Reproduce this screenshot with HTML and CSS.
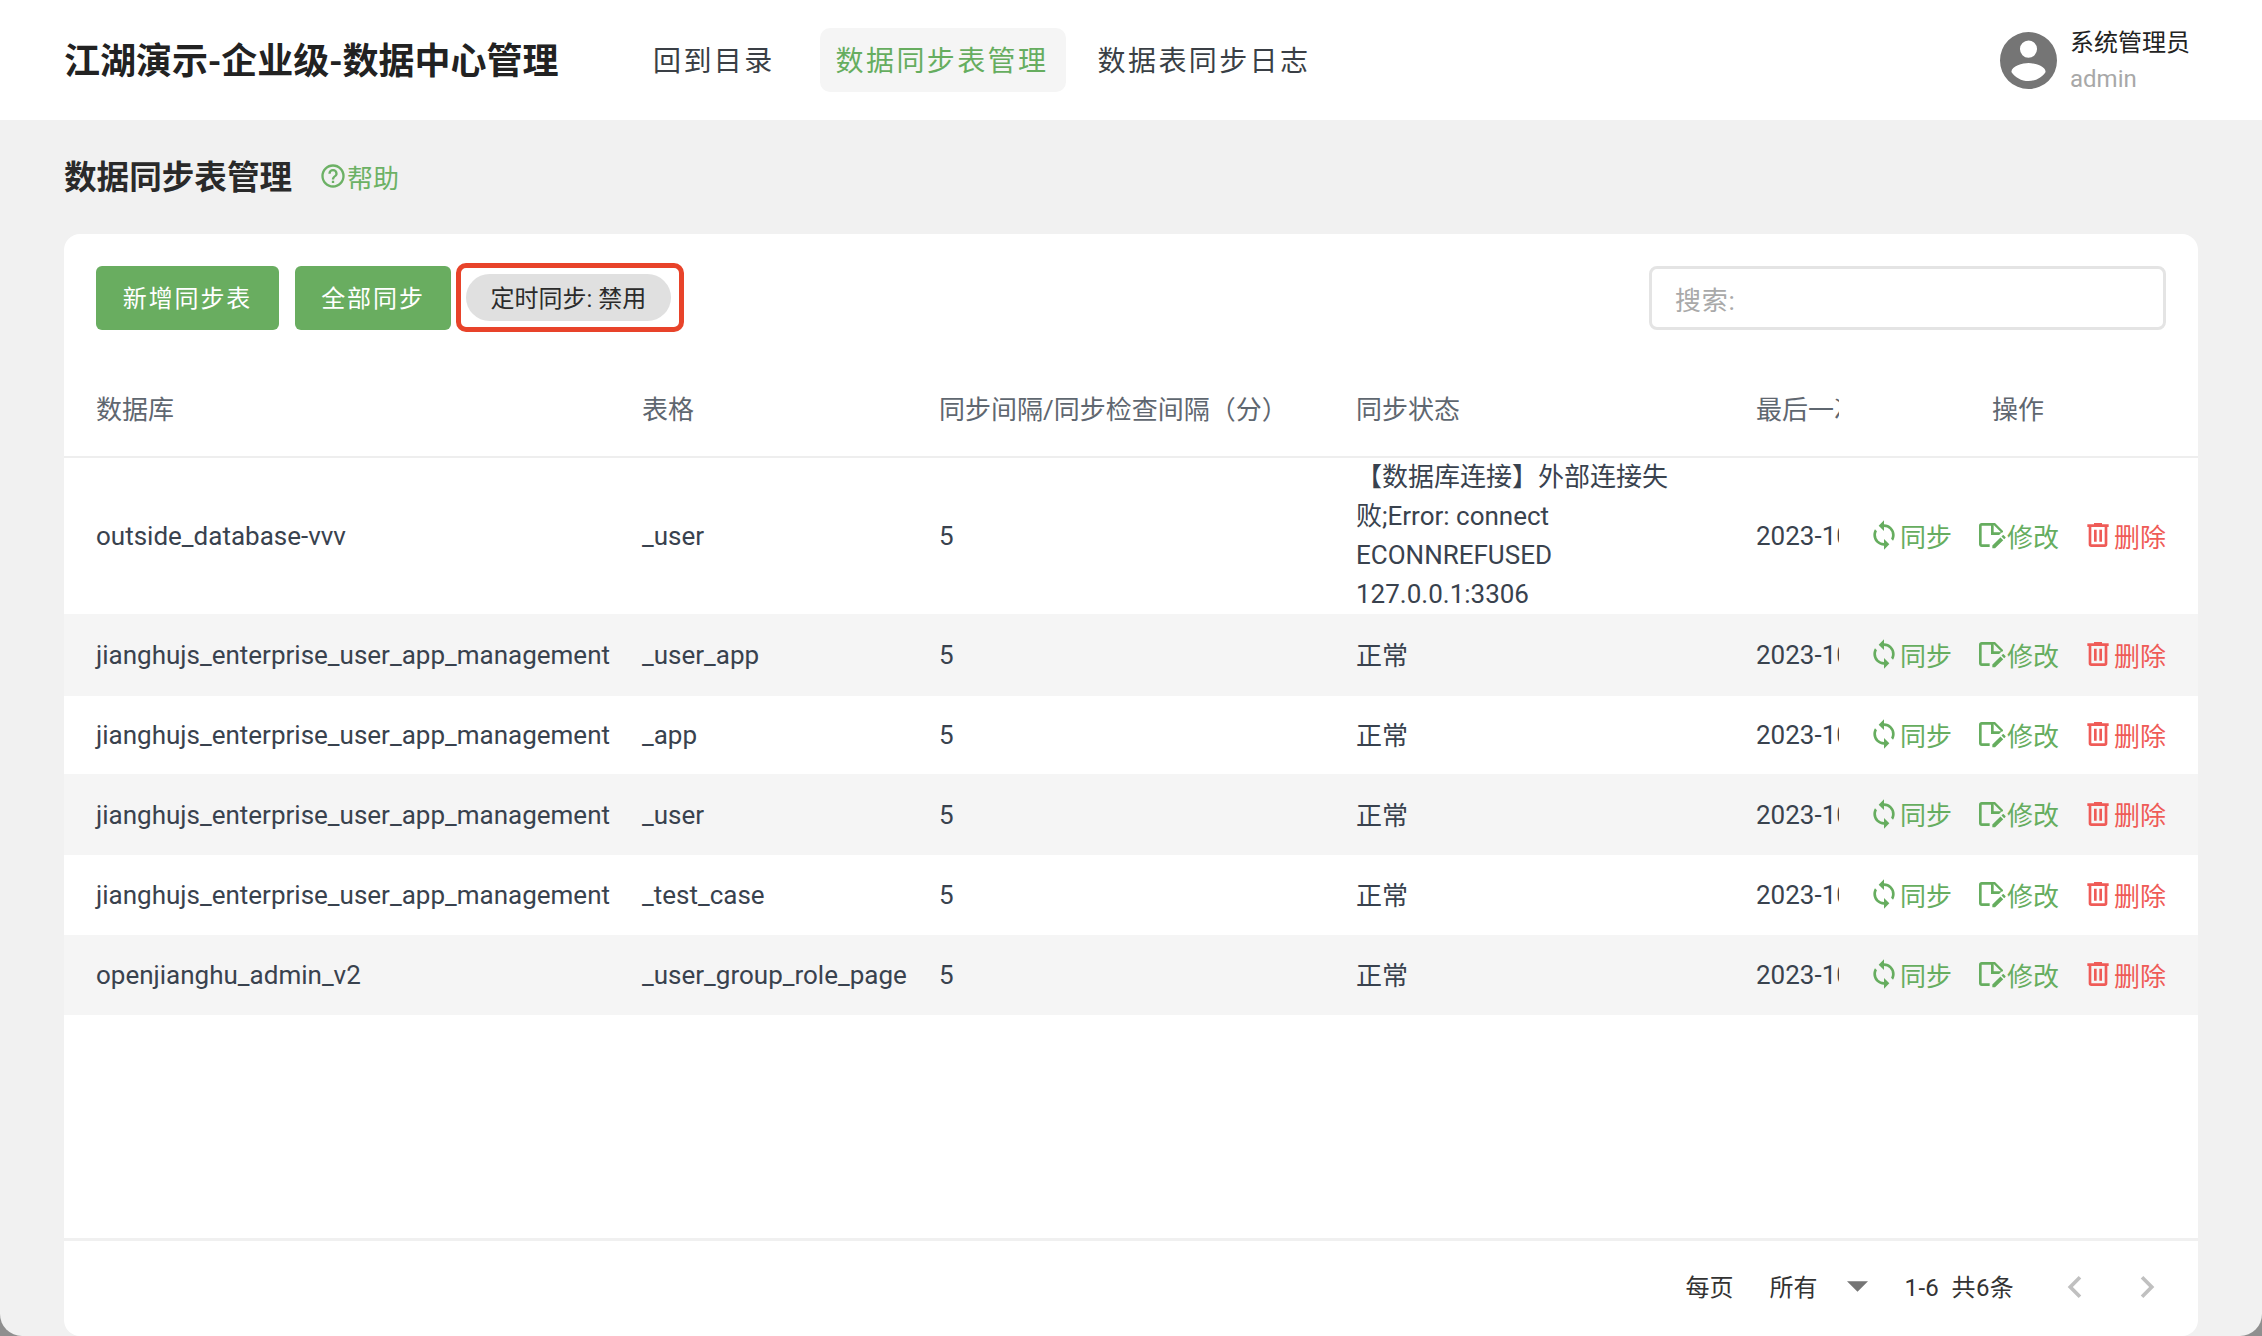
FILE: index.html
```html
<!DOCTYPE html>
<html lang="zh-CN">
<head>
<meta charset="utf-8">
<title>数据同步表管理</title>
<link rel="stylesheet" href="styles.css">
</head>
<body>
<div class="app">
  <header class="topbar">
    <div class="brand">江湖演示-企业级-数据中心管理</div>
    <nav class="nav">
      <a class="nav-item">回到目录</a>
      <a class="nav-item active">数据同步表管理</a>
      <a class="nav-item">数据表同步日志</a>
    </nav>
    <div class="user">
      <svg class="avatar" viewBox="2 2 20 20"><path d="M12,19.2C9.5,19.2 7.29,17.92 6,16C6.03,14 10,12.9 12,12.9C14,12.9 17.97,14 18,16C16.71,17.92 14.5,19.2 12,19.2M12,5A3,3 0 0,1 15,8A3,3 0 0,1 12,11A3,3 0 0,1 9,8A3,3 0 0,1 12,5M12,2A10,10 0 0,0 2,12A10,10 0 0,0 12,22A10,10 0 0,0 22,12A10,10 0 0,0 12,2Z"/></svg>
      <div class="user-text">
        <div class="user-name">系统管理员</div>
        <div class="user-id">admin</div>
      </div>
    </div>
  </header>
  <main class="main">
    <div class="page-head">
      <h1 class="page-title">数据同步表管理</h1>
      <a class="help">
        <svg class="help-icon" viewBox="0 0 24 24"><path d="M11,18H13V16H11V18M12,2A10,10 0 0,0 2,12A10,10 0 0,0 12,22A10,10 0 0,0 22,12A10,10 0 0,0 12,2M12,20C7.59,20 4,16.41 4,12C4,7.59 7.59,4 12,4C16.41,4 20,7.59 20,12C20,16.41 16.41,20 12,20M12,6A4,4 0 0,0 8,10H10A2,2 0 0,1 12,8A2,2 0 0,1 14,10C14,12 11,11.75 11,15H13C13,12.75 16,12.5 16,10A4,4 0 0,0 12,6Z"/></svg>帮助
      </a>
    </div>
    <section class="card">
      <div class="toolbar">
        <button class="btn btn-add">新增同步表</button>
        <button class="btn btn-all">全部同步</button>
        <div class="mark"><span class="chip">定时同步: 禁用</span></div>
        <div class="search">搜索:</div>
      </div>
      <table class="table">
        <colgroup>
          <col class="c1"><col class="c2"><col class="c3"><col class="c4"><col class="c5"><col class="c6">
        </colgroup>
        <thead>
          <tr>
            <th>数据库</th><th>表格</th><th>同步间隔/同步检查间隔（分）</th><th>同步状态</th>
            <th><div class="clip">最后一次同步时间</div></th><th class="th-ops">操作</th>
          </tr>
        </thead>
        <tbody>
          <tr class="r1">
            <td>outside_database-vvv</td><td>_user</td><td>5</td>
            <td class="status">【数据库连接】外部连接失败;Error: connect ECONNREFUSED 127.0.0.1:3306</td>
            <td><div class="clip">2023-10-12</div></td>
            <td class="ops">
              <a class="op"><svg class="ic" viewBox="0 0 24 24"><path d="M12,18A6,6 0 0,1 6,12C6,11 6.25,10.03 6.7,9.2L5.24,7.74C4.46,8.97 4,10.43 4,12A8,8 0 0,0 12,20V23L16,19L12,15M12,4V1L8,5L12,9V6A6,6 0 0,1 18,12C18,13 17.75,13.97 17.3,14.8L18.76,16.26C19.54,15.03 20,13.57 20,12A8,8 0 0,0 12,4Z"/></svg>同步</a>
              <a class="op"><svg class="ic" viewBox="0 0 24 24"><path d="M18.13 12L19.39 10.74C19.83 10.3 20.39 10.06 21 10V9L15 3H5C3.89 3 3 3.89 3 5V19C3 20.1 3.89 21 5 21H11V19.13L11.13 19H5V5H12V12H18.13M14 4.5L19.5 10H14V4.5M19.13 13.83L21.17 15.87L15.04 22H13V19.96L19.13 13.83M22.85 14.19L21.87 15.17L19.83 13.13L20.81 12.15C21 11.95 21.33 11.95 21.53 12.15L22.85 13.47C23.05 13.67 23.05 14 22.85 14.19Z"/></svg>修改</a>
              <a class="op del"><svg class="ic" viewBox="0 0 24 24"><path d="M9,3V4H4V6H5V19A2,2 0 0,0 7,21H17A2,2 0 0,0 19,19V6H20V4H15V3H9M7,6H17V19H7V6M9,8V17H11V8H9M13,8V17H15V8H13Z"/></svg>删除</a>
            </td>
          </tr>
          <tr class="r2">
            <td>jianghujs_enterprise_user_app_management</td><td>_user_app</td><td>5</td><td class="ok">正常</td>
            <td><div class="clip">2023-10-12</div></td>
            <td class="ops">
              <a class="op"><svg class="ic" viewBox="0 0 24 24"><path d="M12,18A6,6 0 0,1 6,12C6,11 6.25,10.03 6.7,9.2L5.24,7.74C4.46,8.97 4,10.43 4,12A8,8 0 0,0 12,20V23L16,19L12,15M12,4V1L8,5L12,9V6A6,6 0 0,1 18,12C18,13 17.75,13.97 17.3,14.8L18.76,16.26C19.54,15.03 20,13.57 20,12A8,8 0 0,0 12,4Z"/></svg>同步</a>
              <a class="op"><svg class="ic" viewBox="0 0 24 24"><path d="M18.13 12L19.39 10.74C19.83 10.3 20.39 10.06 21 10V9L15 3H5C3.89 3 3 3.89 3 5V19C3 20.1 3.89 21 5 21H11V19.13L11.13 19H5V5H12V12H18.13M14 4.5L19.5 10H14V4.5M19.13 13.83L21.17 15.87L15.04 22H13V19.96L19.13 13.83M22.85 14.19L21.87 15.17L19.83 13.13L20.81 12.15C21 11.95 21.33 11.95 21.53 12.15L22.85 13.47C23.05 13.67 23.05 14 22.85 14.19Z"/></svg>修改</a>
              <a class="op del"><svg class="ic" viewBox="0 0 24 24"><path d="M9,3V4H4V6H5V19A2,2 0 0,0 7,21H17A2,2 0 0,0 19,19V6H20V4H15V3H9M7,6H17V19H7V6M9,8V17H11V8H9M13,8V17H15V8H13Z"/></svg>删除</a>
            </td>
          </tr>
          <tr class="r3">
            <td>jianghujs_enterprise_user_app_management</td><td>_app</td><td>5</td><td class="ok">正常</td>
            <td><div class="clip">2023-10-12</div></td>
            <td class="ops">
              <a class="op"><svg class="ic" viewBox="0 0 24 24"><path d="M12,18A6,6 0 0,1 6,12C6,11 6.25,10.03 6.7,9.2L5.24,7.74C4.46,8.97 4,10.43 4,12A8,8 0 0,0 12,20V23L16,19L12,15M12,4V1L8,5L12,9V6A6,6 0 0,1 18,12C18,13 17.75,13.97 17.3,14.8L18.76,16.26C19.54,15.03 20,13.57 20,12A8,8 0 0,0 12,4Z"/></svg>同步</a>
              <a class="op"><svg class="ic" viewBox="0 0 24 24"><path d="M18.13 12L19.39 10.74C19.83 10.3 20.39 10.06 21 10V9L15 3H5C3.89 3 3 3.89 3 5V19C3 20.1 3.89 21 5 21H11V19.13L11.13 19H5V5H12V12H18.13M14 4.5L19.5 10H14V4.5M19.13 13.83L21.17 15.87L15.04 22H13V19.96L19.13 13.83M22.85 14.19L21.87 15.17L19.83 13.13L20.81 12.15C21 11.95 21.33 11.95 21.53 12.15L22.85 13.47C23.05 13.67 23.05 14 22.85 14.19Z"/></svg>修改</a>
              <a class="op del"><svg class="ic" viewBox="0 0 24 24"><path d="M9,3V4H4V6H5V19A2,2 0 0,0 7,21H17A2,2 0 0,0 19,19V6H20V4H15V3H9M7,6H17V19H7V6M9,8V17H11V8H9M13,8V17H15V8H13Z"/></svg>删除</a>
            </td>
          </tr>
          <tr class="r4">
            <td>jianghujs_enterprise_user_app_management</td><td>_user</td><td>5</td><td class="ok">正常</td>
            <td><div class="clip">2023-10-12</div></td>
            <td class="ops">
              <a class="op"><svg class="ic" viewBox="0 0 24 24"><path d="M12,18A6,6 0 0,1 6,12C6,11 6.25,10.03 6.7,9.2L5.24,7.74C4.46,8.97 4,10.43 4,12A8,8 0 0,0 12,20V23L16,19L12,15M12,4V1L8,5L12,9V6A6,6 0 0,1 18,12C18,13 17.75,13.97 17.3,14.8L18.76,16.26C19.54,15.03 20,13.57 20,12A8,8 0 0,0 12,4Z"/></svg>同步</a>
              <a class="op"><svg class="ic" viewBox="0 0 24 24"><path d="M18.13 12L19.39 10.74C19.83 10.3 20.39 10.06 21 10V9L15 3H5C3.89 3 3 3.89 3 5V19C3 20.1 3.89 21 5 21H11V19.13L11.13 19H5V5H12V12H18.13M14 4.5L19.5 10H14V4.5M19.13 13.83L21.17 15.87L15.04 22H13V19.96L19.13 13.83M22.85 14.19L21.87 15.17L19.83 13.13L20.81 12.15C21 11.95 21.33 11.95 21.53 12.15L22.85 13.47C23.05 13.67 23.05 14 22.85 14.19Z"/></svg>修改</a>
              <a class="op del"><svg class="ic" viewBox="0 0 24 24"><path d="M9,3V4H4V6H5V19A2,2 0 0,0 7,21H17A2,2 0 0,0 19,19V6H20V4H15V3H9M7,6H17V19H7V6M9,8V17H11V8H9M13,8V17H15V8H13Z"/></svg>删除</a>
            </td>
          </tr>
          <tr class="r5">
            <td>jianghujs_enterprise_user_app_management</td><td>_test_case</td><td>5</td><td class="ok">正常</td>
            <td><div class="clip">2023-10-12</div></td>
            <td class="ops">
              <a class="op"><svg class="ic" viewBox="0 0 24 24"><path d="M12,18A6,6 0 0,1 6,12C6,11 6.25,10.03 6.7,9.2L5.24,7.74C4.46,8.97 4,10.43 4,12A8,8 0 0,0 12,20V23L16,19L12,15M12,4V1L8,5L12,9V6A6,6 0 0,1 18,12C18,13 17.75,13.97 17.3,14.8L18.76,16.26C19.54,15.03 20,13.57 20,12A8,8 0 0,0 12,4Z"/></svg>同步</a>
              <a class="op"><svg class="ic" viewBox="0 0 24 24"><path d="M18.13 12L19.39 10.74C19.83 10.3 20.39 10.06 21 10V9L15 3H5C3.89 3 3 3.89 3 5V19C3 20.1 3.89 21 5 21H11V19.13L11.13 19H5V5H12V12H18.13M14 4.5L19.5 10H14V4.5M19.13 13.83L21.17 15.87L15.04 22H13V19.96L19.13 13.83M22.85 14.19L21.87 15.17L19.83 13.13L20.81 12.15C21 11.95 21.33 11.95 21.53 12.15L22.85 13.47C23.05 13.67 23.05 14 22.85 14.19Z"/></svg>修改</a>
              <a class="op del"><svg class="ic" viewBox="0 0 24 24"><path d="M9,3V4H4V6H5V19A2,2 0 0,0 7,21H17A2,2 0 0,0 19,19V6H20V4H15V3H9M7,6H17V19H7V6M9,8V17H11V8H9M13,8V17H15V8H13Z"/></svg>删除</a>
            </td>
          </tr>
          <tr class="r6">
            <td>openjianghu_admin_v2</td><td>_user_group_role_page</td><td>5</td><td class="ok">正常</td>
            <td><div class="clip">2023-10-12</div></td>
            <td class="ops">
              <a class="op"><svg class="ic" viewBox="0 0 24 24"><path d="M12,18A6,6 0 0,1 6,12C6,11 6.25,10.03 6.7,9.2L5.24,7.74C4.46,8.97 4,10.43 4,12A8,8 0 0,0 12,20V23L16,19L12,15M12,4V1L8,5L12,9V6A6,6 0 0,1 18,12C18,13 17.75,13.97 17.3,14.8L18.76,16.26C19.54,15.03 20,13.57 20,12A8,8 0 0,0 12,4Z"/></svg>同步</a>
              <a class="op"><svg class="ic" viewBox="0 0 24 24"><path d="M18.13 12L19.39 10.74C19.83 10.3 20.39 10.06 21 10V9L15 3H5C3.89 3 3 3.89 3 5V19C3 20.1 3.89 21 5 21H11V19.13L11.13 19H5V5H12V12H18.13M14 4.5L19.5 10H14V4.5M19.13 13.83L21.17 15.87L15.04 22H13V19.96L19.13 13.83M22.85 14.19L21.87 15.17L19.83 13.13L20.81 12.15C21 11.95 21.33 11.95 21.53 12.15L22.85 13.47C23.05 13.67 23.05 14 22.85 14.19Z"/></svg>修改</a>
              <a class="op del"><svg class="ic" viewBox="0 0 24 24"><path d="M9,3V4H4V6H5V19A2,2 0 0,0 7,21H17A2,2 0 0,0 19,19V6H20V4H15V3H9M7,6H17V19H7V6M9,8V17H11V8H9M13,8V17H15V8H13Z"/></svg>删除</a>
            </td>
          </tr>
        </tbody>
      </table>
      <footer class="pager">
        <span class="pg-label">每页</span>
        <span class="pg-select">所有</span>
        <svg class="pg-caret" viewBox="7 10 10 5"><path d="M7,10L12,15L17,10H7Z"/></svg>
        <span class="pg-range">1-6&nbsp;&nbsp;共6条</span>
        <svg class="pg-arrow prev" viewBox="0 0 24 24"><path d="M15.41,16.58L10.83,12L15.41,7.41L14,6L8,12L14,18L15.41,16.58Z"/></svg>
        <svg class="pg-arrow" viewBox="0 0 24 24"><path d="M8.59,16.58L13.17,12L8.59,7.41L10,6L16,12L10,18L8.59,16.58Z"/></svg>
      </footer>
    </section>
  </main>
</div>
</body>
</html>
```
FILE: styles.css
```css
* { box-sizing: border-box; }
html, body { margin: 0; height: 100%; background: #8f8f8f; }
body {
  font-family: Roboto, "Noto Sans CJK SC", sans-serif;
  font-size: 26px;
  color: #2f3a47;
  overflow: hidden;
}
.app {
  height: 1336px;
  background: #f1f1f1;
  border-radius: 0 0 22px 22px;
  overflow: hidden;
  display: flex;
  flex-direction: column;
}
.topbar {
  height: 120px;
  flex: none;
  background: #fff;
  display: flex;
  align-items: center;
  padding: 0 64px;
}
.brand {
  font-size: 36px;
  font-weight: 600;
  color: #222;
  width: 589px;
  flex: none;
  padding-bottom: 4px;
}
.nav { display: flex; align-items: center; gap: 32px; font-size: 28px; }
.nav-item {
  height: 64px;
  line-height: 67px;
  letter-spacing: 2.4px;
  color: #3a3f45;
  border-radius: 10px;
}
.nav-item.active {
  background: #f5f5f5;
  color: #66ad5f;
  padding: 0 16px;
  width: 246px;
}
.nav-item:first-child { margin-right: 13px; }
.user { margin-left: auto; display: flex; align-items: center; gap: 13px; margin-right: 8px; }
.avatar { width: 57px; height: 57px; fill: #757575; }
.user-text { line-height: 1; }
.user-name { font-size: 24px; color: #222; margin-top: 2px; margin-bottom: 12px; }
.user-id { font-size: 24px; color: #a8a8a8; }
.main {
  flex: 1;
  min-height: 0;
  padding: 0 64px;
  display: flex;
  flex-direction: column;
}
.page-head {
  height: 114px;
  flex: none;
  display: flex;
  align-items: center;
  padding-bottom: 5px;
  gap: 27px;
}
.page-title { margin: 0; font-size: 32.6px; font-weight: 600; color: #2a2a2a; }
.help { display: flex; align-items: center; color: #6cb165; font-size: 26px; padding-top: 3px; }
.help-icon { width: 28px; height: 28px; fill: #6cb165; margin-right: 0; }
.card {
  flex: 1;
  min-height: 0;
  background: #fff;
  border-radius: 16px;
  display: flex;
  flex-direction: column;
}
.toolbar {
  height: 125px;
  flex: none;
  padding: 29px 32px 0;
  display: flex;
  align-items: flex-start;
}
.btn {
  height: 64px;
  margin-top: 3px;
  border: 0;
  border-radius: 6px;
  background: #69ad60;
  color: #fff;
  font-family: inherit;
  font-size: 24px;
  letter-spacing: 1.9px;
  padding: 0 0 3px;
}
.btn-add { width: 183px; margin-right: 16px; }
.btn-all { width: 156px; margin-right: 5px; }
.mark {
  width: 228px;
  height: 69px;
  border: 5px solid #e8432a;
  border-radius: 10px;
  padding: 5px;
  display: flex;
  align-items: center;
}
.chip {
  width: 205px;
  height: 47px;
  border-radius: 24px;
  background: #e0e0e0;
  color: #2b2b2b;
  font-size: 24px;
  display: flex;
  align-items: center;
  justify-content: center;
  padding-bottom: 2px;
}
.search {
  margin-left: auto;
  margin-top: 3px;
  width: 517px;
  height: 64px;
  border: 3px solid #e4e4e4;
  border-radius: 8px;
  padding: 0 23px;
  display: flex;
  align-items: center;
  color: #a9a9a9;
  font-size: 26px;
  letter-spacing: 0.8px;
}
.table { width: 2134px; table-layout: fixed; border-collapse: collapse; flex: none; }
.c1 { width: 546px; }
.c2 { width: 297px; }
.c3 { width: 417px; }
.c4 { width: 400px; }
.c5 { width: 114px; }
.c6 { width: 360px; }
th, td {
  padding: 0 0 0 32px;
  text-align: left;
  font-weight: 400;
  white-space: nowrap;
}
th {
  height: 98px;
  color: #5f6770;
  border-bottom: 2px solid #eeeeee;
}
.th-ops { text-align: center; padding: 0; }
td { color: #39424e; }
.r1 { height: 157px; }
.r2 { height: 82px; background: #f5f5f5; }
.r3 { height: 78px; }
.r4 { height: 81px; background: #f5f5f5; }
.r5 { height: 80px; }
.r6 { height: 80px; background: #f5f5f5; }
.status { white-space: normal; line-height: 39px; padding-right: 40px; }
.ok { padding-bottom: 3px; }
.clip { width: 83px; overflow: hidden; white-space: nowrap; }
.ops { padding: 0 32px 2px 0; text-align: right; font-size: 0; }
.op {
  display: inline-flex;
  align-items: center;
  font-size: 26px;
  color: #66ad5f;
  margin-left: 23px;
  vertical-align: middle;
}
.op.del { color: #ef5b57; }
.ic { width: 32px; height: 32px; fill: currentColor; margin-right: 0; }
.pager {
  margin-top: auto;
  height: 98px;
  flex: none;
  border-top: 3px solid #f0f0f0;
  display: flex;
  align-items: center;
  padding: 0 29px 7px 0;
  justify-content: flex-end;
  font-size: 24px;
  color: #333;
}
.pg-label { margin-right: 36px; }
.pg-select { margin-right: 29px; }
.pg-caret { width: 21px; height: 11px; fill: #757575; margin-right: 37px; margin-top: 3px; }
.pg-range { margin-right: 39px; letter-spacing: 0.3px; }
.pg-arrow { width: 44px; height: 44px; fill: #c0c0c0; margin-top: 4px; }
.pg-arrow.prev { margin-right: 28px; }
```
